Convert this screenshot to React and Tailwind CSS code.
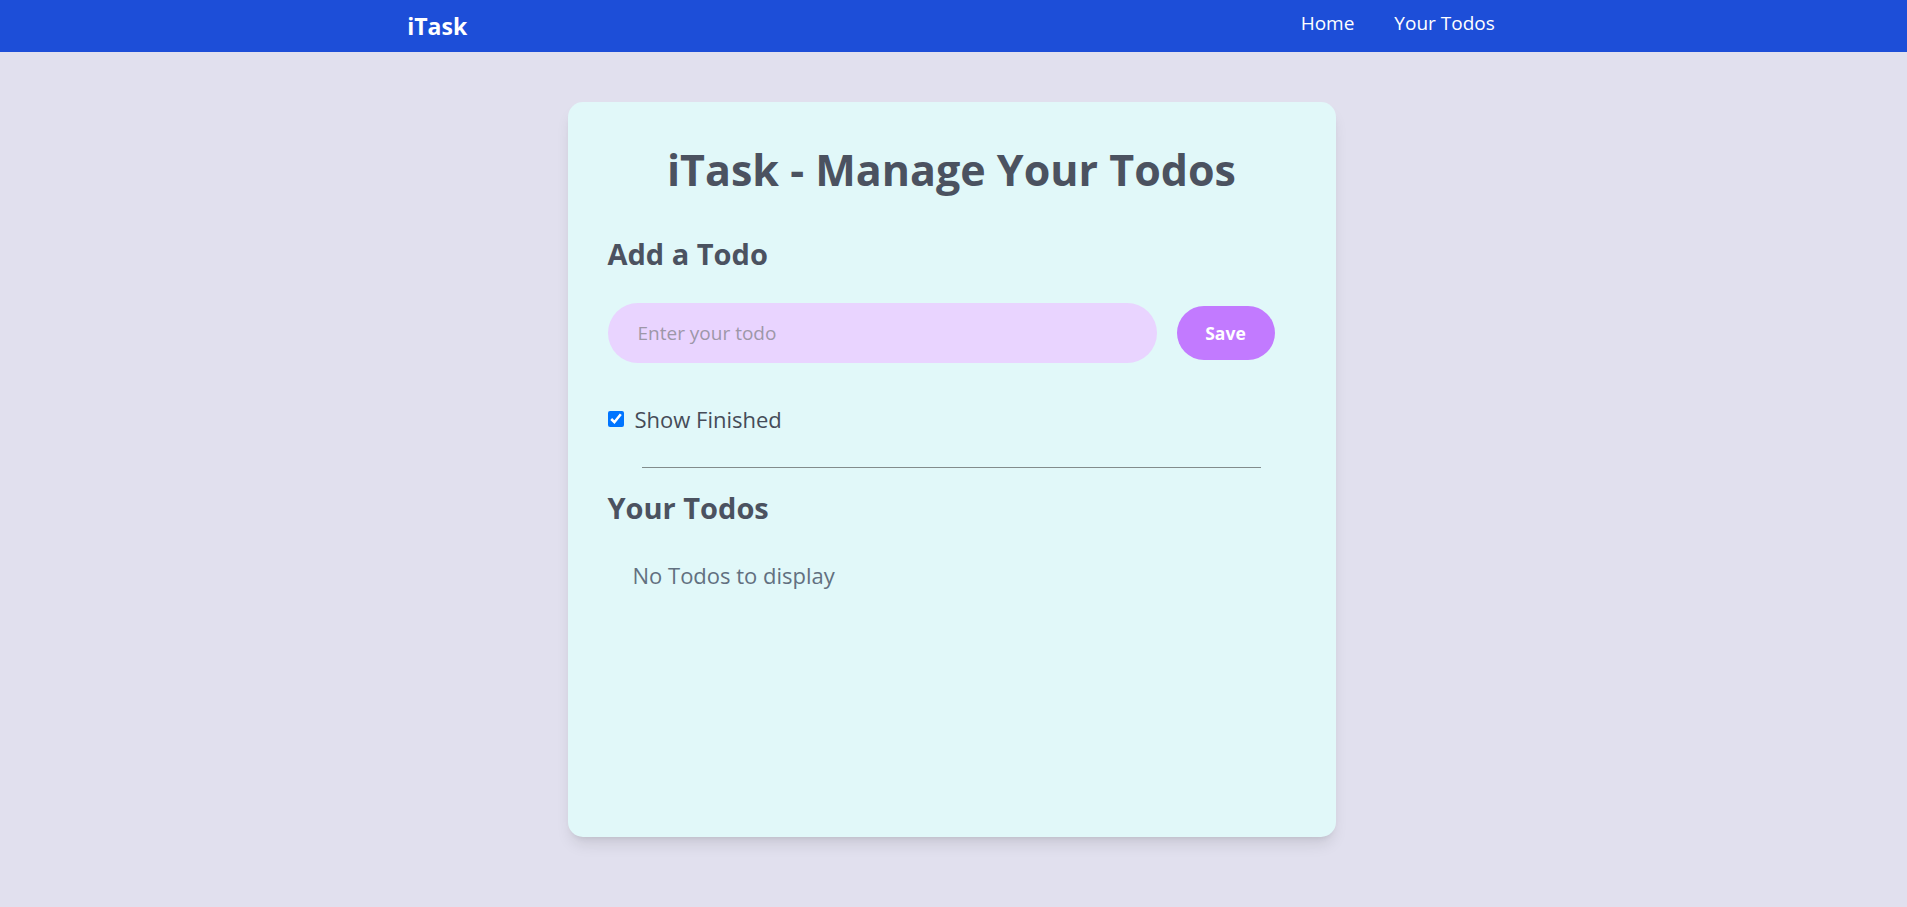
import { useState } from 'react';

export default function App() {
  const [todo, setTodo] = useState('');
  const [todos, setTodos] = useState([]);
  const [showFinished, setShowFinished] = useState(true);

  const handleAdd = () => {
    if (!todo.trim()) return;
    setTodos([...todos, { id: Date.now(), todo, isCompleted: false }]);
    setTodo('');
  };

  const visible = todos.filter((item) => showFinished || !item.isCompleted);

  return (
    <div className="min-h-screen bg-[#e1e0ee] font-['Open_Sans',sans-serif]">
      {/* Navbar */}
      <nav className="flex justify-around items-center bg-[#1d4ed8] text-white h-[52px]">
        <div className="logo">
          <span className="font-bold text-[23px] ml-[35px] mr-10">iTask</span>
        </div>
        <ul className="flex gap-10 ml-[49px] mr-[40px] pb-[5px] text-[19px]">
          <li className="cursor-pointer">Home</li>
          <li className="cursor-pointer">Your Todos</li>
        </ul>
      </nav>

      {/* Card */}
      <main className="mx-auto mt-[50px] w-[768px] min-h-[735px] rounded-[15px] bg-[#e1f8f9] p-10 shadow-lg text-[#4b5260] -translate-x-[2px]">
        <h1 className="pt-[3px] font-bold text-center text-[43px] leading-[50px]">iTask - Manage Your Todos</h1>

        <h2 className="mt-[39px] text-[29px] leading-[40px] font-bold">Add a Todo</h2>
        <div className="mt-[29px] flex items-center gap-5">
          <input
            type="text"
            value={todo}
            onChange={(e) => setTodo(e.target.value)}
            placeholder="Enter your todo"
            className="w-[549px] h-[60px] rounded-full bg-purple-200 px-[30px] text-[19px] outline-none placeholder:text-[#9d97a8]"
          />
          <button
            onClick={handleAdd}
            className="w-[98px] h-[54px] rounded-full bg-purple-400 text-white text-[17.5px] font-bold"
          >
            Save
          </button>
        </div>

        <label className="mt-[41px] flex items-center gap-[11px] h-[30px] text-[22px] text-[#454c58]">
          <input
            type="checkbox"
            checked={showFinished}
            onChange={() => setShowFinished(!showFinished)}
            className="w-4 h-4"
          />
          Show Finished
        </label>

        <div className="mt-[33px] mx-auto w-[90%] h-px bg-[#828c8c]" />

        <h2 className="mt-[20px] text-[29px] leading-[40px] font-bold">Your Todos</h2>
        <div className="mt-[30px]">
          {visible.length === 0 && (
            <div className="mx-[25px] text-[22px] leading-[35px] text-[#627080]">No Todos to display</div>
          )}
          {visible.map((item) => (
            <div key={item.id} className="flex gap-5 my-3 text-[20px]">
              <div className={item.isCompleted ? 'line-through' : ''}>{item.todo}</div>
            </div>
          ))}
        </div>
      </main>
    </div>
  );
}
